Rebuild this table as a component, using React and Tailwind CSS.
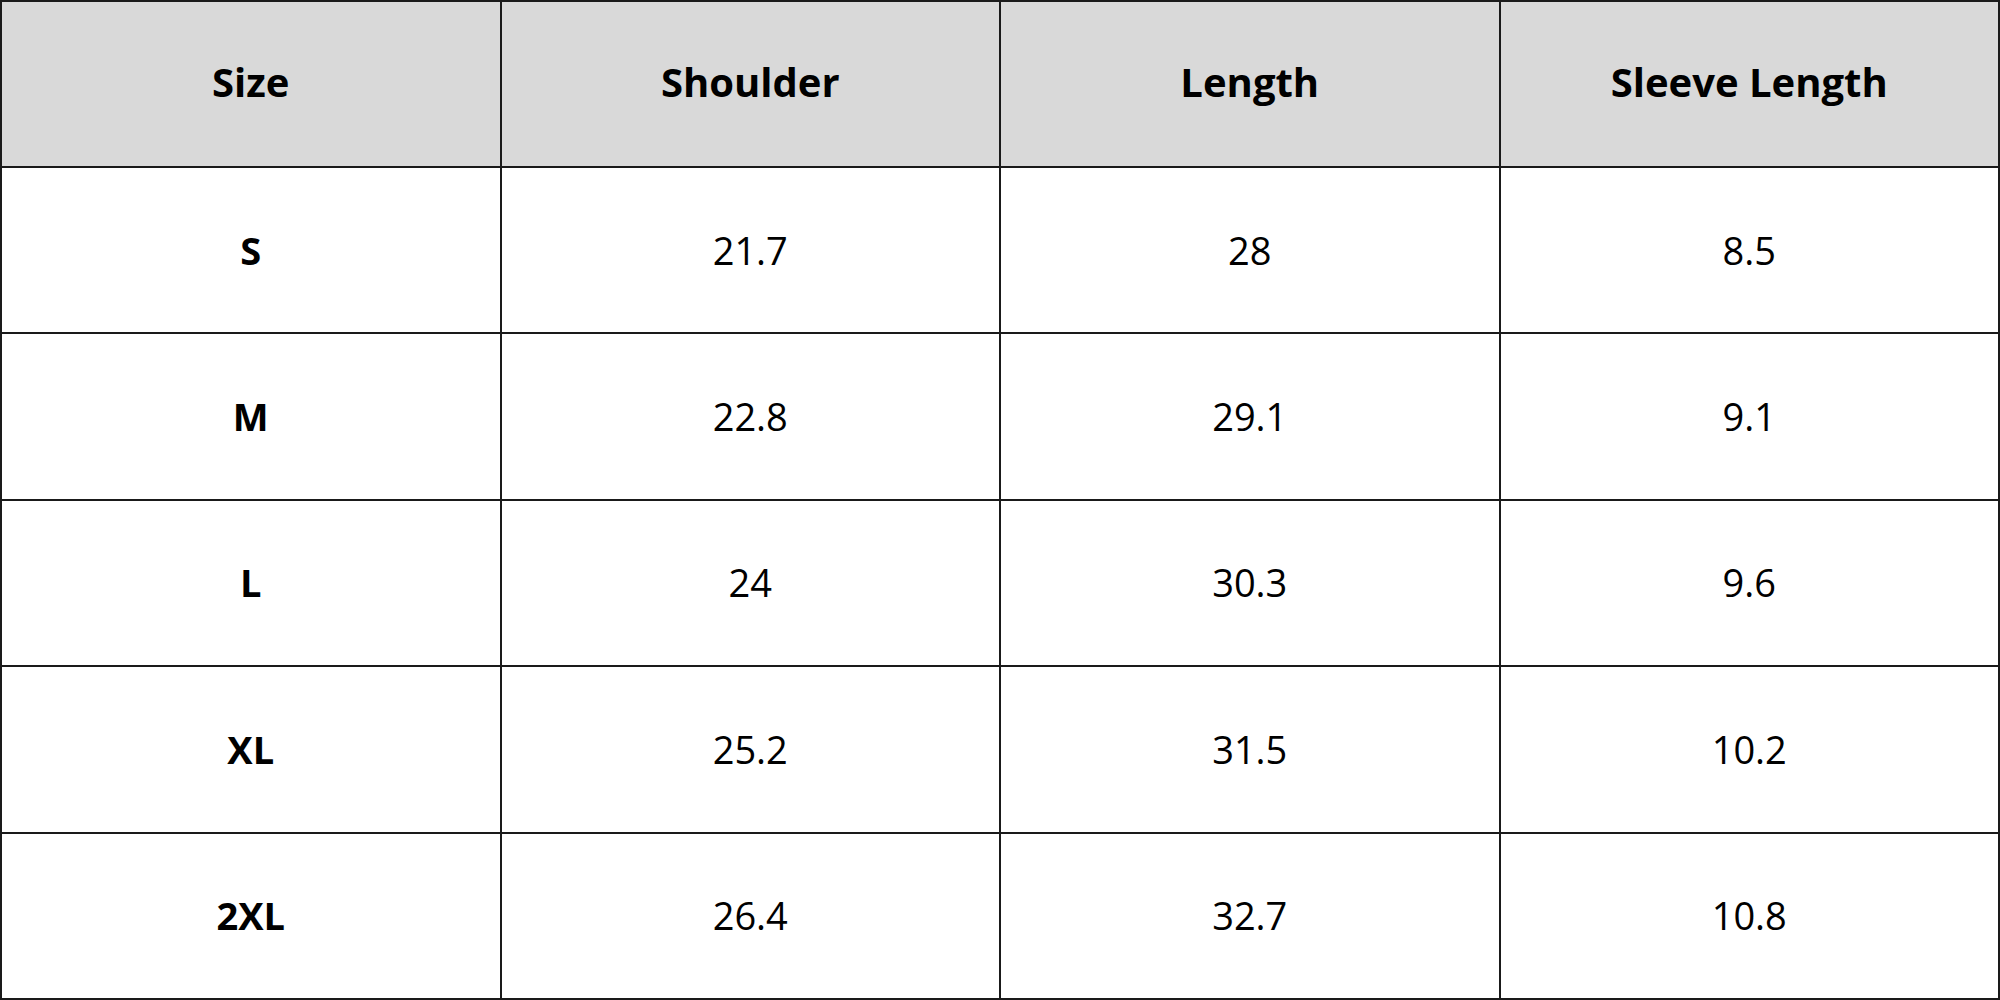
import React from "react";

const headers = ["Size", "Shoulder", "Length", "Sleeve Length"];
const rows = [
  ["S", "21.7", "28", "8.5"],
  ["M", "22.8", "29.1", "9.1"],
  ["L", "24", "30.3", "9.6"],
  ["XL", "25.2", "31.5", "10.2"],
  ["2XL", "26.4", "32.7", "10.8"],
];

export default function App() {
  return (
    <div
      className="w-[2000px] h-[1000px] bg-white text-black overflow-hidden"
      style={{ fontFamily: '"Open Sans", "Noto Sans", sans-serif' }}
    >
      <table className="w-full h-full border-collapse table-fixed">
        <thead>
          <tr className="h-[166px] bg-[#d9d9d9]">
            {headers.map((h) => (
              <th
                key={h}
                className="border-2 border-[#1a1a1a] text-[40px] font-bold text-center align-middle pb-[5px]"
              >
                {h}
              </th>
            ))}
          </tr>
        </thead>
        <tbody>
          {rows.map((r) => (
            <tr key={r[0]} className="h-[166px]">
              {r.map((c, i) => (
                <td
                  key={i}
                  className={
                    "border-2 border-[#1a1a1a] text-center align-middle text-[38px] " +
                    (i === 0 ? "font-bold" : "font-normal")
                  }
                >
                  {c}
                </td>
              ))}
            </tr>
          ))}
        </tbody>
      </table>
    </div>
  );
}
